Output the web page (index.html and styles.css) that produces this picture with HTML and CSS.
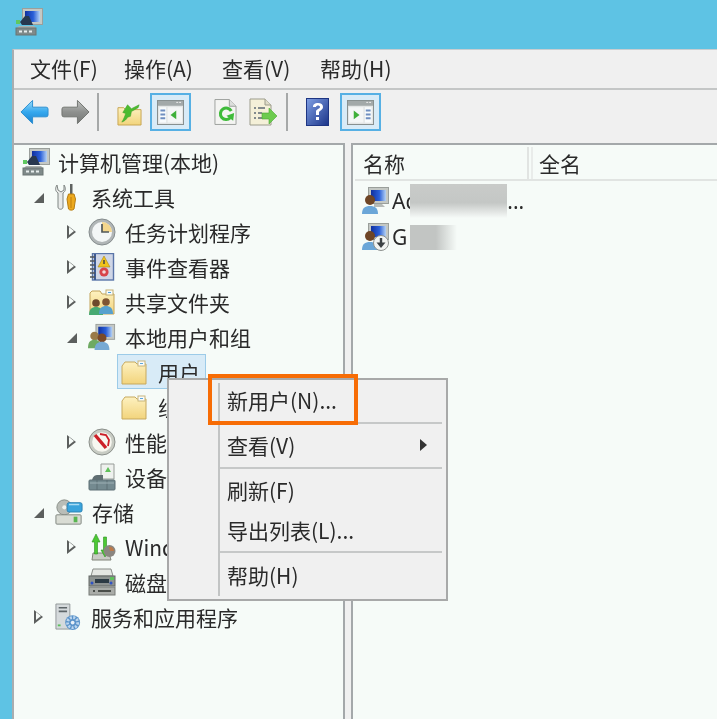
FILE: index.html
```html
<!DOCTYPE html>
<html lang="zh">
<head>
<meta charset="utf-8">
<title>计算机管理</title>
<link rel="stylesheet" href="styles.css">
</head>
<body>
<svg class="defs" width="0" height="0">
  <defs>
    <linearGradient id="g-folder" x1="0" y1="0" x2="0" y2="1"><stop offset="0" stop-color="#fdf1c0"/><stop offset="1" stop-color="#f2d47c"/></linearGradient>
    <linearGradient id="g-screen" x1="0" y1="0" x2="1" y2="0"><stop offset="0" stop-color="#10309f"/><stop offset=".55" stop-color="#2a5fd8"/><stop offset="1" stop-color="#b5d2f4"/></linearGradient>
    <linearGradient id="g-back" x1="0" y1="0" x2="0" y2="1"><stop offset="0" stop-color="#9adcf8"/><stop offset=".5" stop-color="#35a8ee"/><stop offset="1" stop-color="#1c80cc"/></linearGradient>
    <linearGradient id="g-next" x1="0" y1="0" x2="0" y2="1"><stop offset="0" stop-color="#c0c2c0"/><stop offset=".5" stop-color="#8e908e"/><stop offset="1" stop-color="#767876"/></linearGradient>
    <linearGradient id="g-help" x1="0" y1="0" x2="1" y2="1"><stop offset="0" stop-color="#7f9fe4"/><stop offset="1" stop-color="#1b3488"/></linearGradient>
    <symbol id="i-pc" viewBox="0 0 28 28">
      <rect x="7.500" y=".5" width="20" height="16" fill="#c4c8c4" stroke="#9a9f9b"/>
      <rect x="10" y="3" width="15" height="11" fill="url(#g-screen)"/>
      <path d="M5 14l5-6h4l4 9H7z" fill="#27384f"/>
      <rect x="1" y="12" width="4" height="4" fill="#60c860"/>
      <path d="M4 18h15l2 2H2z" fill="#aab0ae"/>
      <rect x="1" y="20" width="20" height="7" fill="#7f8a8a" stroke="#6a7473"/>
      <path d="M4 23.500h3M9 23.500h3M14 23.500h3" stroke="#e8eeee" stroke-width="2"/>
    </symbol>
    <symbol id="i-tools" viewBox="0 0 22 28">
      <path d="M2 2C0 5 0 8 3 10v14c0 3 5 3 5 0V10c3-2 3-5 1-8v5l-3 2-3-2z" fill="#e8eae8" stroke="#7f8583"/>
      <rect x="15" y="1" width="2.500" height="11" fill="#5f6361"/>
      <path d="M13.500 11h5.500l1.500 5-1.500 10c-1 1.500-4.500 1.500-5.500 0L12 16z" fill="#eca91e" stroke="#b57c10"/>
      <path d="M16 14v11" stroke="#c7850f" stroke-width="1.200"/>
    </symbol>
    <symbol id="i-clock" viewBox="0 0 28 28">
      <circle cx="14" cy="14" r="13" fill="#b1b6b7" stroke="#858c8d"/>
      <circle cx="14" cy="14" r="10" fill="#f3f6f6"/>
      <path d="M14 14V4a10 10 0 0 1 10 10z" fill="#f4d68c"/>
      <path d="M14 6v8h7" fill="none" stroke="#525859" stroke-width="1.700"/>
    </symbol>
    <symbol id="i-event" viewBox="0 0 26 28">
      <rect x="3.500" y=".5" width="21" height="26.500" fill="#cfd6e6" stroke="#5a75a8" stroke-width="1.400"/>
      <path d="M6 1v26" stroke="#3d5b94" stroke-width="2"/>
      <path d="M1 4h5M1 8h5M1 12h5M1 16h5M1 20h5M1 24h5" stroke="#50545a" stroke-width="1.500"/>
      <path d="M15 3l6 11H9z" fill="#f0c31c" stroke="#a8861a" stroke-width=".6"/>
      <path d="M15 7v4" stroke="#444" stroke-width="1.500"/>
      <circle cx="15" cy="19" r="4.600" fill="#d8444a"/>
      <circle cx="15" cy="19" r="1.800" fill="#f3d8d8"/>
    </symbol>
    <symbol id="i-share" viewBox="0 0 28 28">
      <path d="M2 5l2-2h8l2 3h12v20H2z" fill="url(#g-folder)" stroke="#c2a258"/>
      <rect x="18" y="2" width="7" height="5" fill="#f8fbfc" stroke="#c4b070"/>
      <path d="M20 4.500h3" stroke="#4da1dc"/>
      <circle cx="8" cy="15" r="3.800" fill="#6e4a2c"/>
      <path d="M1 27c0-6 3-8 7-8s7 2 7 8z" fill="#47aa72"/>
      <circle cx="18" cy="14" r="3.800" fill="#7f5532"/>
      <path d="M11 26c0-6 3-8 7-8s7 2 7 8z" fill="#57a0cd"/>
    </symbol>
    <symbol id="i-group" viewBox="0 0 30 28">
      <rect x="8.500" y=".5" width="20" height="16" fill="#c4c8c4" stroke="#9a9f9b"/>
      <rect x="11" y="3" width="15" height="11" fill="url(#g-screen)"/>
      <circle cx="7" cy="13" r="4.600" fill="#9a7a48"/>
      <path d="M0 26c0-7 3-9 7-9s7 2 7 9z" fill="#6eaa62"/>
      <circle cx="15" cy="15" r="4.800" fill="#7a4a28"/>
      <path d="M7 28c0-7 4-9 8-9s8 2 8 9z" fill="#77a9d3"/>
    </symbol>
    <symbol id="i-folder" viewBox="0 0 26 26">
      <path d="M1 7l3-4h10l2 2h9v20H1z" fill="url(#g-folder)" stroke="#c7a95f"/>
      <rect x="17" y="2" width="7" height="5" fill="#fafbfa" stroke="#c7b67c"/>
      <path d="M19 4.500h3" stroke="#5aa6dc"/>
    </symbol>
    <symbol id="i-perf" viewBox="0 0 28 28">
      <circle cx="14" cy="14" r="13" fill="#c8ccc4" stroke="#8a8f8a"/>
      <circle cx="14" cy="14" r="9.800" fill="#f7f7f0"/>
      <path d="M7 7l11 13" stroke="#cc2028" stroke-width="3.400"/>
      <path d="M12 6l6 1 3 5-1 6" fill="none" stroke="#cc2028" stroke-width="1.800"/>
    </symbol>
    <symbol id="i-device" viewBox="0 0 28 28">
      <path d="M13 1h13v15H13z" fill="#eef1ee" stroke="#979c98"/>
      <path d="M17 9l3-5 3 5z" fill="#5fc059"/>
      <path d="M4 17c1-4 3-5 6-5h5v5z" fill="#5f6e72"/>
      <rect x="1" y="17" width="26" height="10" rx="1" fill="#748a90" stroke="#5c6f74"/>
      <path d="M9 17v10M19 17v10" stroke="#5c6f74"/>
      <path d="M2 20h24" stroke="#9db0b5"/>
    </symbol>
    <symbol id="i-store" viewBox="0 0 30 28">
      <circle cx="10" cy="9" r="8" fill="#b9bdb7" stroke="#888d87"/>
      <circle cx="10" cy="9" r="2.200" fill="#f0f2ee"/>
      <rect x="13" y="4" width="16" height="10" rx="2" fill="#3aa4dc" stroke="#2c81b2"/>
      <path d="M15 6h11" stroke="#a9dcf4" stroke-width="1.600"/>
      <rect x="1" y="17" width="27" height="10" rx="1" fill="#d9dcd4" stroke="#7c827c"/>
      <rect x="20" y="19" width="4" height="6" fill="#58b550"/>
    </symbol>
    <symbol id="i-wsb" viewBox="0 0 28 28">
      <path d="M5 20h16l2 7H4z" fill="#c9cbc5" stroke="#808379"/>
      <path d="M4 9l4-8 4 8H9.500v12h-3V9z" fill="#4cc934" stroke="#2c8e20" stroke-width=".6"/>
      <path d="M13 17l4 7 4-7h-2.500V4h-3v13z" fill="#4cc934" stroke="#2c8e20" stroke-width=".6"/>
      <circle cx="21.500" cy="18" r="6" fill="#8a8680"/>
      <path d="M21 14a4 4 0 0 1 5 4h-4z" fill="#bc7a4a"/>
    </symbol>
    <symbol id="i-disk" viewBox="0 0 28 28">
      <path d="M5 1h18l2 7H3z" fill="#e5e7e3" stroke="#8a8e89"/>
      <rect x="1" y="8" width="26" height="10" fill="#8d9290" stroke="#656966"/>
      <path d="M7 11h14v4H7z" fill="#2c3a44"/>
      <circle cx="4" cy="15" r="1.500" fill="#2f52c4"/>
      <circle cx="23" cy="15" r="1.500" fill="#2f52c4"/>
      <rect x="22" y="9" width="4" height="3" fill="#5fc05c"/>
      <rect x="1" y="19" width="26" height="8" fill="#a9aca8" stroke="#777b77"/>
      <path d="M5 23h2M10 23h13" stroke="#4a4e4a" stroke-width="2"/>
    </symbol>
    <symbol id="i-svc" viewBox="0 0 28 30">
      <path d="M1 1h15v27H1z" fill="#d5dadc" stroke="#8f9596"/>
      <path d="M4 5h9M4 9h9" stroke="#5d6568" stroke-width="1.800"/>
      <rect x="3" y="23" width="3" height="2" fill="#5bc05c"/>
      <circle cx="19" cy="21" r="8" fill="#5c94ca"/>
      <circle cx="19" cy="21" r="5.500" fill="none" stroke="#bcd6ef" stroke-width="3" stroke-dasharray="2.200 1.500"/>
      <circle cx="19" cy="21" r="2" fill="#e9f1f9"/>
    </symbol>
    <symbol id="i-user" viewBox="0 0 28 28">
      <rect x="7.500" y=".5" width="20" height="16" fill="#c4c8c4" stroke="#9a9f9b"/>
      <rect x="10" y="3" width="15" height="11" fill="url(#g-screen)"/>
      <path d="M13 17h8l3 3H13z" fill="#b6bab7"/>
      <circle cx="9" cy="13" r="5" fill="#6e4526"/>
      <path d="M1 27c0-6 3-8 8-8s8 2 8 8z" fill="#6ba6d8"/>
    </symbol>
    <symbol id="i-guest" viewBox="0 0 28 28">
      <rect x="7.500" y=".5" width="20" height="16" fill="#c4c8c4" stroke="#9a9f9b"/>
      <rect x="10" y="3" width="15" height="11" fill="url(#g-screen)"/>
      <circle cx="9" cy="13" r="5" fill="#6e4526"/>
      <path d="M1 27c0-6 3-8 8-8s8 2 8 8z" fill="#6ba6d8"/>
      <circle cx="20" cy="20" r="7.500" fill="#f2f4f2" stroke="#8c908d"/>
      <path d="M20 15v5" stroke="#3d4245" stroke-width="2.400"/>
      <path d="M15.500 19.500h9L20 25z" fill="#3d4245"/>
    </symbol>
  </defs>
</svg>

<div class="titlebar"><svg class="ic-title"><use href="#i-pc"/></svg></div>

<main class="window">
  <nav class="menubar">
    <span class="menu-top">文件(F)</span>
    <span class="menu-top">操作(A)</span>
    <span class="menu-top">查看(V)</span>
    <span class="menu-top">帮助(H)</span>
  </nav>

  <div class="toolbar">
    <svg class="tb tb-arrow" viewBox="0 0 30 26"><path d="M1 13L13 1v7h14q2 0 2 2v6q0 2-2 2H13v7z" fill="url(#g-back)" stroke="#2a8ed0"/></svg>
    <svg class="tb tb-arrow tb-next" viewBox="0 0 30 26"><path d="M29 13L17 1v7H3q-2 0-2 2v6q0 2 2 2h14v7z" fill="url(#g-next)" stroke="#70736f"/></svg>
    <span class="tb-sep"></span>
    <svg class="tb tb-up" viewBox="0 0 26 28"><path d="M1 9h6l2 2h16v16H1z" fill="url(#g-folder)" stroke="#c7a450"/><path d="M5 24c2-3 3-6 4-9l-3-1 5-8 4 4 8-4-1 3-7 4-1 5-3 1c-1 2-3 4-6 5z" fill="#4cbb2f" stroke="#389a22" stroke-width=".5"/></svg>
    <span class="tb-toggle tb-toggle-tree">
      <svg class="tb-pane" viewBox="0 0 28 26"><rect x=".5" y=".5" width="27" height="25" fill="#e3e6e6" stroke="#858c8c"/><rect x="1" y="1" width="26" height="5" fill="#a2a9a9"/><path d="M20 2.500h2M23 2.500h2" stroke="#eee"/><rect x="2.500" y="7.500" width="7" height="16" fill="#f8fbfc"/><path d="M3.500 11h5M3.500 15h5M3.500 19h5" stroke="#6f8fc0" stroke-width="2"/><rect x="11" y="7.500" width="15" height="16" fill="#f4f6f6"/><path d="M20 11v9l-6-4.500z" fill="#3fb03a"/></svg>
    </span>
    <svg class="tb tb-doc tb-refresh" viewBox="0 0 24 28"><path d="M1 1h15l7 7v19H1z" fill="#f4f4f2" stroke="#9c9f9c"/><path d="M16 1v7h7" fill="#dcdedc" stroke="#9c9f9c"/><path d="M17 20a6 6 0 1 1 1-7" fill="none" stroke="#3fbb3a" stroke-width="3.200"/><path d="M13 18l7 5 1-8z" fill="#3fbb3a"/></svg>
    <svg class="tb tb-doc tb-export" viewBox="0 0 28 28"><path d="M1 1h15l6 6v20H1z" fill="#f4f0d8" stroke="#9c9c8c"/><path d="M16 1v6h6" fill="#dedcc8" stroke="#9c9c8c"/><path d="M5 10h2M9 10h7M5 15h2M9 15h4M5 20h2M9 20h4" stroke="#5d6a74" stroke-width="1.500"/><path d="M13 15h7v-5l8 8-8 8v-5h-7z" fill="#6ccb4e" stroke="#4ca936" stroke-width=".6"/></svg>
    <span class="tb-sep tb-sep-2"></span>
    <svg class="tb tb-help" viewBox="0 0 23 28" role="img" aria-label="帮助"><rect x=".5" y=".5" width="22" height="27" fill="url(#g-help)" stroke="#1e3583"/><path d="M7 9c0-3 2-4 5-4s5 1.500 5 4-3 3.500-4 5v3h-3v-4c1-2 4-2.500 4-4 0-1-1-1.500-2-1.500s-2 .5-2 1.500z" fill="#fff"/><rect x="10" y="19" width="3" height="3" fill="#fff"/></svg>
    <span class="tb-toggle tb-toggle-action">
      <svg class="tb-pane" viewBox="0 0 28 26"><rect x=".5" y=".5" width="27" height="25" fill="#e3e6e6" stroke="#858c8c"/><rect x="1" y="1" width="26" height="5" fill="#a2a9a9"/><path d="M20 2.500h2M23 2.500h2" stroke="#eee"/><rect x="2" y="7.500" width="15" height="16" fill="#f4f6f6"/><path d="M7 11v9l6-4.500z" fill="#3fb03a"/><rect x="18.500" y="7.500" width="7" height="16" fill="#f8fbfc"/><path d="M19.500 11h5M19.500 15h5M19.500 19h5" stroke="#6f8fc0" stroke-width="2"/></svg>
    </span>
  </div>

  <div class="panes">
    <section class="pane pane-tree">
      <ul class="tree">
        <li class="row lv0"><svg class="ic ic-l0"><use href="#i-pc"/></svg><span>计算机管理(本地)</span></li>
        <li class="row lv1"><i class="tw open"></i><svg class="ic ic-tools"><use href="#i-tools"/></svg><span>系统工具</span></li>
        <li class="row lv2"><i class="tw"></i><svg class="ic"><use href="#i-clock"/></svg><span>任务计划程序</span></li>
        <li class="row lv2"><i class="tw"></i><svg class="ic"><use href="#i-event"/></svg><span>事件查看器</span></li>
        <li class="row lv2"><i class="tw"></i><svg class="ic"><use href="#i-share"/></svg><span>共享文件夹</span></li>
        <li class="row lv2"><i class="tw open"></i><svg class="ic"><use href="#i-group"/></svg><span>本地用户和组</span></li>
        <li class="row lv3 selected"><svg class="ic ic-folder"><use href="#i-folder"/></svg><span>用户</span></li>
        <li class="row lv3"><svg class="ic ic-folder"><use href="#i-folder"/></svg><span>组</span></li>
        <li class="row lv2"><i class="tw"></i><svg class="ic"><use href="#i-perf"/></svg><span>性能</span></li>
        <li class="row lv2"><i class="tw none"></i><svg class="ic"><use href="#i-device"/></svg><span>设备</span></li>
        <li class="row lv1"><i class="tw open"></i><svg class="ic ic-store"><use href="#i-store"/></svg><span>存储</span></li>
        <li class="row lv2"><i class="tw"></i><svg class="ic"><use href="#i-wsb"/></svg><span>Wind</span></li>
        <li class="row lv2"><i class="tw none"></i><svg class="ic"><use href="#i-disk"/></svg><span>磁盘</span></li>
        <li class="row lv1"><i class="tw"></i><svg class="ic ic-svc"><use href="#i-svc"/></svg><span>服务和应用程序</span></li>
      </ul>
    </section>

    <section class="pane pane-list">
      <div class="list-head">
        <div class="col col-name">名称</div>
        <div class="col col-full">全名</div>
      </div>
      <div class="list-row"><svg class="ic-user"><use href="#i-user"/></svg><span>Ad</span><span class="redact redact-a"></span><span>...</span></div>
      <div class="list-row"><svg class="ic-user"><use href="#i-guest"/></svg><span>G</span><span class="redact redact-g"></span></div>
    </section>
  </div>

  <div class="ctx">
    <div class="ctx-rail"></div>
    <div class="ctx-body">
      <div class="ctx-item ctx-new">新用户(N)...</div>
      <hr class="ctx-sep">
      <div class="ctx-item ctx-view"><span>查看(V)</span><i class="ctx-arrow"></i></div>
      <hr class="ctx-sep">
      <div class="ctx-item ctx-refresh">刷新(F)</div>
      <div class="ctx-item ctx-export">导出列表(L)...</div>
      <hr class="ctx-sep">
      <div class="ctx-item ctx-help">帮助(H)</div>
    </div>
  </div>
  <div class="callout"></div>
</main>
</body>
</html>
```
FILE: styles.css
```css
* { box-sizing: border-box; }
html, body { margin: 0; height: 100%; }
body {
  background: #5ec3e4;
  font-family: "Noto Sans CJK SC", "Noto Sans", sans-serif;
  color: #2a2a2a;
  font-size: 21px;
  overflow: hidden;
  display: flex;
  flex-direction: column;
  height: 719px;
}
.defs { position: absolute; }
.titlebar { height: 49px; padding: 8px 0 0 15px; flex: none; }
.ic-title { width: 28px; height: 28px; display: block; filter: blur(.5px); }

.window {
  position: relative;
  flex: 1;
  margin-left: 12px;
  background: #f0f0f0;
  border-top: 1px solid #c8cdd0;
  border-left: 2px solid #a8adb0;
  display: flex;
  flex-direction: column;
  min-height: 0;
}
.menubar {
  height: 40px;
  flex: none;
  display: grid;
  grid-template-columns: 94px 98px 98px auto;
  align-items: center;
  padding-left: 16px;
  border-bottom: 2px solid #c4c6c6;
  filter: blur(.4px);
}
.menu-top { line-height: 36px; margin-top: -3px; }

.toolbar {
  height: 53px;
  flex: none;
  display: flex;
  align-items: center;
  padding: 0 0 9px 6px;
  filter: blur(.5px);
}
.tb { display: block; flex: none; }
.tb-arrow { width: 29px; height: 26px; margin-right: 12px; }
.tb-next { margin-right: 7px; }
.tb-sep { width: 2px; height: 38px; background: #a6a8a8; margin: 0 18px 0 0; flex: none; }
.tb-sep-2 { margin: 0 18px 0 9px; }
.tb-up { width: 25px; height: 27px; margin-right: 8px; }
.tb-toggle {
  width: 41px;
  height: 38px;
  border: 2px solid #56b0e4;
  background: #d8ebf7;
  display: flex;
  align-items: center;
  justify-content: center;
  flex: none;
}
.tb-pane { width: 27px; height: 25px; display: block; }
.tb-refresh { width: 23px; height: 28px; margin: 0 12px 0 23px; }
.tb-export { width: 28px; height: 28px; }
.tb-help { width: 23px; height: 28px; margin-right: 11px; }

.panes {
  flex: 1;
  display: flex;
  gap: 6px;
  min-height: 0;
  filter: blur(.4px);
}
.pane {
  background: #f6fbf8;
  border-top: 2px solid #a4a8aa;
  min-height: 0;
}
.pane-tree { width: 331px; flex: none; border-right: 2px solid #a4a8aa; overflow: hidden; }
.pane-list { flex: 1; padding: 2px 0 0 2px; border-left: 2px solid #a4a8aa; }

.tree { list-style: none; margin: -1px 0 0; padding: 0; }
.row {
  height: 35px;
  display: flex;
  align-items: center;
  white-space: nowrap;
}
.row span { line-height: 30px; }
.row svg { filter: blur(.3px); }
.ic { width: 28px; height: 28px; flex: none; margin-right: 9px; }
.ic-l0 { margin-right: 8px; }
.ic-tools { width: 22px; margin-right: 14px; }
.ic-store { width: 28px; margin-right: 9px; }
.ic-svc { width: 26px; margin-right: 10px; }
.ic-folder { width: 26px; height: 26px; margin-right: 11px; }
.lv0 { padding-left: 8px; }
.lv1 { padding-left: 20px; }
.lv2 { padding-left: 53px; }
.lv3 { padding-left: 107px; }
.lv3.selected {
  margin-left: 103px;
  padding-left: 3px;
  width: 89px;
  background: #d8ebf7;
  border: 1px solid #9ccbe8;
}
.tw {
  width: 9px;
  height: 14px;
  margin-right: 12px;
  flex: none;
  position: relative;
  display: block;
  border-style: solid;
  border-width: 7px 0 7px 9px;
  border-color: transparent transparent transparent #5c5f5e;
}
.tw::after {
  content: "";
  position: absolute;
  left: -7.5px;
  top: -4.5px;
  border-style: solid;
  border-width: 4.5px 0 4.5px 5.5px;
  border-color: transparent transparent transparent #f6fbf8;
}
.tw.open {
  width: 10px;
  height: 10px;
  margin: 2px 11px 0 0;
  border-width: 0 0 10px 10px;
  border-color: transparent transparent #5c5f5e transparent;
}
.tw.open::after { display: none; }
.tw.none { visibility: hidden; }

.list-head { display: flex; height: 34px; border-bottom: 2px solid #e1e4e2; gap: 2px; }
.col { display: flex; align-items: center; padding-left: 8px; }
.col-name { width: 174px; border-right: 2px solid #e1e4e2; }
.col-full { flex: 1; border-left: 2px solid #e9ecea; padding-left: 6px; }
.list-row { height: 36px; display: flex; align-items: center; padding-left: 6px; font-family: "Noto Sans", sans-serif; }
.list-head + .list-row { margin-top: 2px; }
.ic-user { width: 28px; height: 28px; flex: none; margin-right: 3px; filter: blur(.3px); }
.redact { display: block; flex: none; }
.redact-a {
  width: 97px;
  height: 34px;
  margin-left: -8px;
  background: linear-gradient(to bottom, #c9cbc9, #c4c7c5 55%, #e6e9e7 85%, #f6fbf8);
}
.redact-g {
  width: 47px;
  height: 25px;
  margin-left: 3px;
  background: linear-gradient(to right, #c2c5c3 55%, #f6fbf8);
}

.ctx {
  position: absolute;
  left: 153px;
  top: 328px;
  width: 281px;
  height: 223px;
  display: flex;
  background: #f0f0f0;
  border: 2px solid #a8a9a9;
  filter: blur(.4px);
}
.ctx-rail { width: 51px; flex: none; border-right: 2px solid #c2c4c4; margin: 3px 0; }
.ctx-body { flex: 1; padding-right: 4px; }
.ctx-item { height: 40px; padding: 0 0 2px 7px; display: flex; align-items: center; justify-content: space-between; }
.ctx-new { height: 42px; padding-bottom: 3px; }
.ctx-view { height: 43px; }
.ctx-refresh { margin-top: 2px; }
.ctx-export { padding-bottom: 3px; }
.ctx-help { margin-top: 1px; height: 44px; }
.ctx-sep { border: 0; height: 2px; background: #c6c8c8; margin: 0; }
.ctx-arrow {
  margin-right: 15px;
  border-style: solid;
  border-width: 6px 0 6px 7px;
  border-color: transparent transparent transparent #333;
}
.callout {
  position: absolute;
  left: 194px;
  top: 324px;
  width: 150px;
  height: 51px;
  border: 4px solid #f76c05;
  filter: blur(.3px);
}
```
